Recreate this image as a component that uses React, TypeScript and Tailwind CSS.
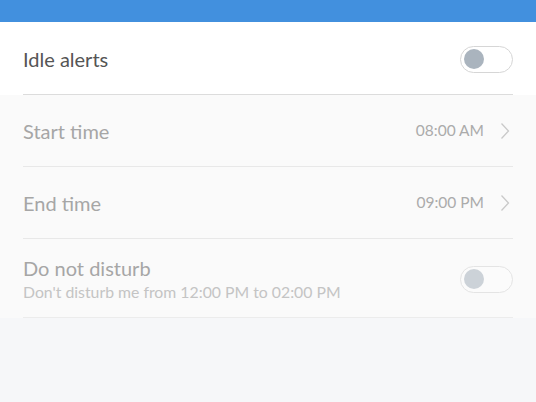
import React from 'react';

const Toggle = ({ dim = false }: { dim?: boolean }) => (
  <div
    className={`w-[53px] h-[27px] rounded-full border flex items-center px-[3px] ${
      dim ? 'border-[#e4e4e4] bg-[#fbfbfb]' : 'border-[#d6d6d6] bg-white'
    }`}
  >
    <div className={`w-[20px] h-[20px] rounded-full ${dim ? 'bg-[#ccd2d8]' : 'bg-[#aab4be]'}`} />
  </div>
);

const Chevron = () => (
  <svg width="10" height="18" viewBox="0 0 10 18" className="ml-[16px] mr-[3px]">
    <path d="M1.5 1.5 L8.5 9 L1.5 16.5" fill="none" stroke="#c9c9c9" strokeWidth="1.3" />
  </svg>
);

const TimeRow = ({ label, value }: { label: string; value: string }) => (
  <div className="h-[72px] flex items-center justify-between border-b border-[#e8e8e8]">
    <span className="text-[20px] text-[#a6a6a6]">{label}</span>
    <div className="flex items-center">
      <span className="text-[15.5px] text-[#ababab]">{value}</span>
      <Chevron />
    </div>
  </div>
);

export default function App() {
  return (
    <div className="w-[536px] h-[402px] bg-[#f6f7f9] font-['Lato','Liberation_Sans',sans-serif] flex flex-col">
      <div className="h-[22px] bg-[#4290de]" />
      <div className="bg-white px-[23px]">
        <div className="h-[73px] flex items-center justify-between border-b border-[#dcdcdc] pt-[2px]">
          <span className="text-[20px] text-[#555555]">Idle alerts</span>
          <Toggle />
        </div>
      </div>
      <div className="bg-[#fafafa] px-[23px]">
        <TimeRow label="Start time" value="08:00 AM" />
        <TimeRow label="End time" value="09:00 PM" />
        <div className="h-[79px] flex items-center justify-between border-b border-[#ececec] pt-[2px]">
          <div className="flex flex-col">
            <span className="text-[20px] leading-[25px] text-[#a6a6a6]">Do not disturb</span>
            <span className="text-[15.8px] leading-[20px] text-[#c4c4c4] mt-[1px]">
              Don't disturb me from 12:00 PM to 02:00 PM
            </span>
          </div>
          <Toggle dim />
        </div>
      </div>
    </div>
  );
}
